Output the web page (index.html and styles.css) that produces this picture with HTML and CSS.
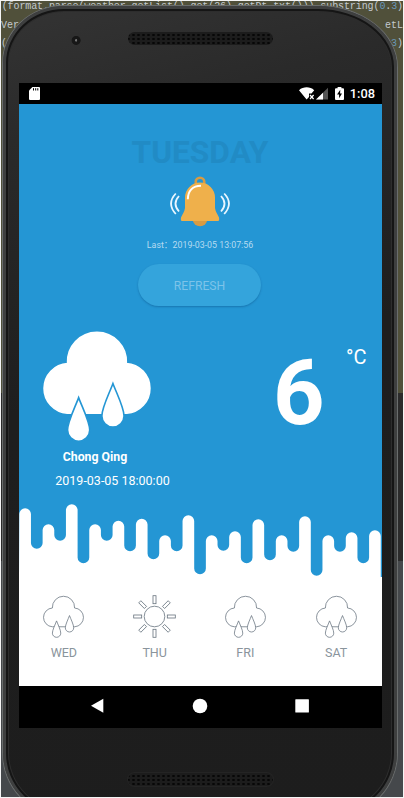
FILE: index.html
```html
<!DOCTYPE html>
<html lang="en">
<head>
<meta charset="utf-8">
<title>Weather</title>
<link rel="stylesheet" href="styles.css">
</head>
<body>
<svg class="defs" aria-hidden="true">
  <symbol id="rain" viewBox="-1 -1 111 113">
    <path class="cloud" d="M25 82.5A24.7 24.7 0 0 1 25.3 33.2A29.2 29.2 0 1 1 83.6 33.2A24.7 24.7 0 0 1 84 82.5Z"/>
    <path d="M36.3 67C40 77 47.3 91 47.3 99.2a11 11 0 0 1-22 0C25.3 91 32.6 77 36.3 67z"/>
    <path d="M70.3 53C74 63 81.3 77 81.3 85.2a11 11 0 0 1-22 0C59.3 77 66.6 63 70.3 53z"/>
  </symbol>
</svg>
<div class="desktop">
  <div class="code" aria-hidden="true">
    <div class="line"><span>(format.parse(weather.getList().get(26).getDt_txt())).substring(<b>0</b>.<b>3</b>)</span></div>
    <div class="line"><span>Ver</span><span>etL</span></div>
    <div class="line"><span>(</span><span><b>3</b>)</span></div>
  </div>
  <div class="phone">
    <div class="bezel-top"><i class="camera"></i><i class="speaker"></i></div>
    <div class="screen">
      <div class="status">
        <svg class="sd" viewBox="0 0 11 13"><path d="M3.4 0H10q1 0 1 1v11q0 1-1 1H1q-1 0-1-1V3.4z" fill="#fff"/><path d="M4.5 1.2v2.3M6.7 1.2v2.3M8.8 1.2v2.3" stroke="#000"/></svg>
        <svg class="signals" viewBox="0 0 30 13"><path d="M0 3.2C4.400-.6 11-.6 15.200 3.200L12.500 6.500H10V10L7.600 12.500z" fill="#fff"/><path d="M11 8l3.600 4M14.600 8L11 12" stroke="#fff" stroke-width="1.200"/><path d="M17 12.500L29 .8V12.500z" fill="#555"/><path d="M17 12.500L24 5.700V12.500z" fill="#fff"/></svg>
        <svg class="battery" viewBox="0 0 9 13"><path d="M2.600 0h3.800v1.300H8q1 0 1 1V12q0 1-1 1H1q-1 0-1-1V2.300q0-1 1-1h1.600z" fill="#fff"/><path d="M5.300 2.800L2 7.600h2.100v3.600L7 6.500H5.100z" fill="#000"/></svg>
        <span class="clock">1:08</span>
      </div>
      <main class="app">
        <h1 class="day">TUESDAY</h1>
        <svg class="bell" viewBox="0 0 60 52">
          <circle cx="30" cy="6" r="4.300" fill="none" stroke="#d89b42" stroke-width="2.600"/>
          <circle cx="30" cy="43" r="7.300" fill="#d89b42"/>
          <path d="M15 21.500a15 15 0 0 1 30 0V32c.4 4 2.400 5.500 4 9.500q.6 3.500-1 3.500H12q-1.600 0-1-3.500c1.600-4 3.600-5.500 4-9.500z" fill="#efb04b"/>
          <path d="M17.800 23.300C18 15 22.500 9.800 31 9.800" fill="none" stroke="#fff" stroke-width="2"/>
          <path d="M5.800 17.500q-9.500 10 0 20.500M9 20q-7 7.700 0 15.500M54.200 17.500q9.500 10 0 20.500M51 20q7 7.700 0 15.500" fill="none" stroke="#e8f6ff" stroke-width="1.800"/>
        </svg>
        <p class="last">Last：2019-03-05 13:07:56</p>
        <button class="refresh">REFRESH</button>
        <section class="now">
          <div class="place">
            <svg class="rain-big"><use href="#rain"/></svg>
            <strong>Chong Qing</strong>
            <time>2019-03-05 18:00:00</time>
          </div>
          <div class="temp">6</div>
          <div class="unit">°C</div>
        </section>
        <svg class="wave" viewBox="0 0 363 78"><path fill="#fff" d="M0 78L.3 14a5.830 5.830 0 0 1 11.660 0V43a5.830 5.830 0 0 0 11.660 0V30a5.830 5.830 0 0 1 11.660 0V35a5.830 5.830 0 0 0 11.660 0V10a5.830 5.830 0 0 1 11.660 0V57.500a5.830 5.830 0 0 0 11.660 0V30a5.830 5.830 0 0 1 11.660 0V35a5.830 5.830 0 0 0 11.660 0V26.500a5.830 5.830 0 0 1 11.660 0V45.500a5.830 5.830 0 0 0 11.660 0V24.500a5.830 5.830 0 0 1 11.660 0V53.500a5.830 5.830 0 0 0 11.660 0V41a5.830 5.830 0 0 1 11.660 0V45.500a5.830 5.830 0 0 0 11.660 0V21a5.830 5.830 0 0 1 11.660 0V68.500a5.830 5.830 0 0 0 11.660 0V41a5.830 5.830 0 0 1 11.660 0V45a5.830 5.830 0 0 0 11.660 0V37a5.830 5.830 0 0 1 11.660 0V57.500a5.830 5.830 0 0 0 11.660 0V25a5.830 5.830 0 0 1 11.660 0V54.500a5.830 5.830 0 0 0 11.660 0V41a5.830 5.830 0 0 1 11.660 0V46a5.830 5.830 0 0 0 11.660 0V22a5.830 5.830 0 0 1 11.660 0V70a5.830 5.830 0 0 0 11.660 0V41a5.830 5.830 0 0 1 11.660 0V46a5.830 5.830 0 0 0 11.660 0V38a5.830 5.830 0 0 1 11.660 0V57.500a5.830 5.830 0 0 0 11.660 0V36a5.830 5.830 0 0 1 11.660 0V77H363V78z"/></svg>
        <section class="forecast">
          <div class="cell"><svg class="icon"><use href="#rain"/></svg><span>WED</span></div>
          <div class="cell">
            <svg class="icon sun" viewBox="-21.500 -21.500 43 43">
              <circle r="10.300"/>
              <g id="rays"><rect x="-1.500" y="-20.800" width="3" height="8"/><rect x="-1.500" y="12.800" width="3" height="8"/><rect x="-20.800" y="-1.500" width="8" height="3"/><rect x="12.800" y="-1.500" width="8" height="3"/></g>
              <use href="#rays" transform="rotate(45)"/>
            </svg><span>THU</span></div>
          <div class="cell"><svg class="icon"><use href="#rain"/></svg><span>FRI</span></div>
          <div class="cell"><svg class="icon"><use href="#rain"/></svg><span>SAT</span></div>
        </section>
      </main>
      <nav class="nav">
        <svg viewBox="0 0 16 16"><path d="M1 7.700L13.300.8V14.700z"/></svg>
        <svg viewBox="0 0 16 16"><circle cx="8" cy="8" r="7.300"/></svg>
        <svg viewBox="0 0 16 16"><rect x="1.300" y="1.300" width="13.600" height="13.200" rx=".5"/></svg>
      </nav>
    </div>
    <div class="bezel-bottom"><i class="speaker"></i></div>
  </div>
</div>
</body>
</html>
```

FILE: styles.css
```css
* { box-sizing: border-box; }
body { margin: 0; background: #f4f4f4; font-family: Roboto, "Noto Sans CJK SC", sans-serif; }
.defs { position: absolute; width: 0; height: 0; }

.desktop {
  position: relative;
  width: 402px;
  height: 796px;
  margin: 1px;
  overflow: hidden;
  background: linear-gradient(#50503a 392px, #2b2b2b 392px, #2b2b2b 560px, #45484b 560px);
}
.code {
  position: absolute;
  inset: 0 0 auto 0;
  font: 10px/18px "Liberation Mono", monospace;
  color: #c3cad0;
}
.code .line { display: flex; justify-content: space-between; white-space: pre; height: 18.500px; margin: -3px 0 3px; }
.code .line:first-child { justify-content: flex-end; letter-spacing: -.1px; }
.code b { font-weight: normal; color: #6897bb; }

.phone {
  position: relative;
  width: 396px;
  height: 812px;
  margin: 4px 0 0 1px;
  border: 1px solid #6a6d6d;
  border-radius: 62px 80px 64px 64px / 58px 62px 64px 64px;
  background: linear-gradient(165deg, #343434, #2a2a2a 15%, #1e1e1e 45%, #1d1d1d);
  box-shadow: inset 0 0 0 3px #3e3f3f, inset 0 0 0 5px #151515, inset 0 0 0 6px #2d2d2d;
}
.bezel-top { display: flex; align-items: center; height: 77px; padding: 0 0 12px 65px; }
.camera {
  width: 14px;
  height: 14px;
  border-radius: 50%;
  background: radial-gradient(circle at 58% 60%, #777 0 8%, #171717 12% 35%, #303030 42%);
}
.speaker {
  width: 145px;
  height: 13px;
  border-radius: 7px;
  background: radial-gradient(circle, #070707 0 1px, transparent 1.400px) 3px 1px / 5px 4px, #1c1c1c;
}
.bezel-top .speaker { margin-left: 46px; }
.bezel-bottom { display: flex; padding: 45px 0 0 125px; }
.bezel-bottom .speaker { box-shadow: 0 0 0 1px #242424; }

.screen { width: 363px; height: 645px; margin-left: 16px; background: #000; overflow: hidden; }
.status { display: flex; align-items: center; height: 21px; padding: 0 7px 0 10px; color: #fff; }
.status .sd { width: 11px; height: 13px; }
.signals { width: 30px; height: 13px; margin-left: auto; }
.battery { width: 9px; height: 13px; margin: 0 6px 0 6px; }
.clock { font-size: 12.800px; font-weight: 500; line-height: 21px; }

.app {
  display: flex;
  flex-direction: column;
  align-items: center;
  height: 581px;
  background: #2496d4;
  color: #fff;
}
.day { margin: 30px 1px 0 0; font-size: 31.700px; line-height: 38px; font-weight: 700; color: #218bc5; }
.bell { flex: none; width: 60px; height: 52px; margin: 4px 1px 0 0; }
.last { margin: 10px 1px 0 0; font-size: 8.800px; line-height: 15px; color: #b5dbf1; }
.refresh {
  flex: none;
  width: 123px;
  height: 42px;
  margin: 11px 2px 0 0;
  padding: 2px 0 0;
  border: 0;
  border-radius: 21px;
  background: #34a4dc;
  box-shadow: 0 1px 2px rgba(0, 60, 110, .35);
  color: #7cc3e9;
  font: 12.200px Roboto, sans-serif;
}
.now { display: flex; flex: none; width: 100%; height: 171px; margin-top: 23px; padding-left: 22px; }
.place { display: flex; flex-direction: column; align-items: center; width: 144px; }
.rain-big { width: 112px; height: 114px; align-self: flex-start; fill: #fff; stroke: #2496d4; stroke-width: 1.600px; color: #fff; flex: none; }
.cloud { stroke: currentColor; }
.place strong { margin: 6px 36px 0 0; font-size: 12.300px; line-height: 16px; font-weight: 700; }
.place time { margin: 8px 1px 0 0; font-size: 12.500px; line-height: 16px; }
.temp { width: 60px; margin-left: 88px; padding-top: 12px; font-size: 90px; line-height: 106px; font-weight: 700; }
.unit { margin-left: 13px; padding-top: 16px; font-size: 20px; line-height: 24px; }
.wave { display: block; flex: none; width: 363px; height: 78px; }
.forecast {
  display: flex;
  flex: none;
  width: 100%;
  height: 108px;
  padding-top: 17px;
  background: #fff;
}
.cell { display: flex; flex: none; flex-direction: column; align-items: center; width: 90.750px; padding-right: 1px; color: #8a949c; font-size: 12.500px; }
.cell span { margin-top: 7px; line-height: 16px; }
.icon { width: 43px; height: 43px; fill: #fff; stroke: #66727d; stroke-width: 2px; color: #66727d; }
.icon.sun { stroke-width: .8px; }

.nav { display: flex; align-items: center; justify-content: center; gap: 86px; height: 43px; padding: 0 1px 1px 0; }
.nav svg { width: 16px; height: 16px; fill: #fff; }
```
